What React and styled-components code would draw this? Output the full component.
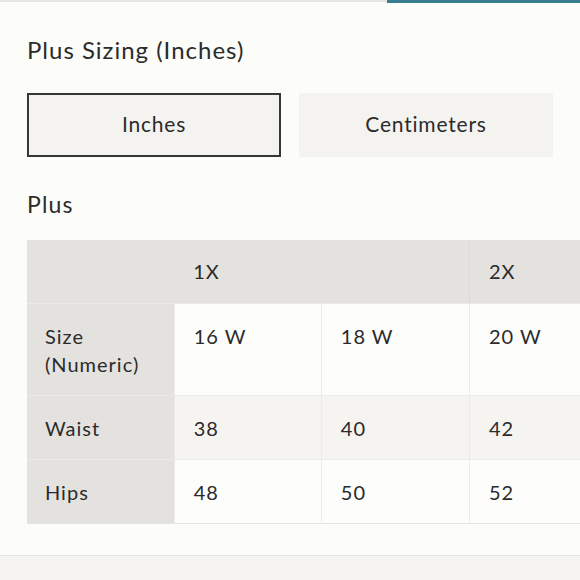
import React from 'react';
import styled, { createGlobalStyle } from 'styled-components';

const GlobalStyle = createGlobalStyle`
  html, body {
    margin: 0;
    padding: 0;
    background: #fcfcf8;
  }
  body {
    font-family: Lato, "Noto Sans", sans-serif;
    color: #2b2b2b;
    overflow: hidden;
  }
`;

const sizes = [
  { label: '1X', cols: ['16 W', '18 W'] },
  { label: '2X', cols: ['20 W', '22 W'] },
  { label: '3X', cols: ['24 W', '26 W'] },
];

const rows = [
  { name: 'Waist', values: ['38', '40', '42', '44', '46', '48'], shade: true },
  { name: 'Hips', values: ['48', '50', '52', '54', '56', '58'] },
];

export default function App() {
  const numeric = sizes.flatMap(s => s.cols);
  return (
    <Page>
      <GlobalStyle />
      <TopBar>
        <TopTrack />
        <TopActive />
      </TopBar>
      <Content>
        <Title>Plus Sizing (Inches)</Title>
        <Toggle>
          <UnitButton active>Inches</UnitButton>
          <UnitButton>Centimeters</UnitButton>
        </Toggle>
        <Subtitle>Plus</Subtitle>
        <TableWrap>
          <Table>
            <colgroup>
              <col style={{ width: 147 }} />
              {numeric.map((n, i) => (
                <col key={n} style={{ width: i === 0 ? 147 : 148 }} />
              ))}
            </colgroup>
            <thead>
              <tr>
                <HeadCell />
                {sizes.map((s, i) => (
                  <HeadCell key={s.label} colSpan={2} divided={i > 0 ? 1 : 0}>
                    {s.label}
                  </HeadCell>
                ))}
              </tr>
            </thead>
            <tbody>
              <tr>
                <RowLabel>
                  Size
                  <br />
                  (Numeric)
                </RowLabel>
                {numeric.map(n => (
                  <Cell key={n}>{n}</Cell>
                ))}
              </tr>
              {rows.map(r => (
                <tr key={r.name}>
                  <RowLabel>{r.name}</RowLabel>
                  {r.values.map((v, i) => (
                    <Cell key={i} shade={r.shade ? 1 : 0}>
                      {v}
                    </Cell>
                  ))}
                </tr>
              ))}
            </tbody>
          </Table>
        </TableWrap>
      </Content>
      <Footer />
    </Page>
  );
}

const Page = styled.div`
  width: 580px;
  height: 580px;
  display: flex;
  flex-direction: column;
  overflow: hidden;
`;

const TopBar = styled.div`
  display: flex;
  height: 3px;
`;

const TopTrack = styled.div`
  width: 387px;
  height: 2px;
  background: #e6e6e2;
`;

const TopActive = styled.div`
  flex: 1;
  background: #3b7d90;
`;

const Content = styled.div`
  padding: 0 0 0 27px;
`;

const Title = styled.h2`
  margin: 30px 0 0;
  font-size: 24px;
  font-weight: 400;
  line-height: 34px;
  letter-spacing: 1px;
`;

const Toggle = styled.div`
  display: flex;
  gap: 18px;
  margin-top: 26px;
`;

const UnitButton = styled.button`
  width: 254px;
  height: 64px;
  box-sizing: border-box;
  font-family: inherit;
  font-size: 21px;
  letter-spacing: 0.8px;
  color: #2b2b2b;
  background: #f4f3f0;
  border: ${p => (p.active ? '2px solid #363636' : '2px solid transparent')};
  padding: 0 0 3px;
`;

const Subtitle = styled.h3`
  margin: 32px 0 0;
  font-size: 23px;
  font-weight: 400;
  line-height: 30px;
  letter-spacing: 1.2px;
`;

const TableWrap = styled.div`
  margin-top: 21px;
  overflow: hidden;
`;

const Table = styled.table`
  border-collapse: collapse;
  table-layout: fixed;
  width: 1035px;
  font-size: 20px;
  line-height: 28px;
  letter-spacing: 1px;
  border-bottom: 1px solid #e4e3df;
`;

const HeadCell = styled.th`
  background: #e4e2de;
  font-weight: 400;
  text-align: left;
  padding: 17px 18px 18px 19px;
  height: 28px;
  border-left: ${p => (p.divided ? '1px solid #dddbd7' : 'none')};
`;

const RowLabel = styled.th`
  background: #e4e2de;
  font-weight: 400;
  text-align: left;
  vertical-align: top;
  padding: 18px 18px 17px;
  border-top: 1px solid #eae9e5;
`;

const Cell = styled.td`
  background: ${p => (p.shade ? '#f5f4f1' : '#fdfdfb')};
  vertical-align: top;
  padding: 18px 18px 17px 19px;
  border-top: 1px solid #ebeae6;
  border-left: 1px solid #ecebe7;
`;

const Footer = styled.div`
  margin-top: auto;
  height: 24px;
  border-top: 1px solid #e6e5e1;
  background: #f4f3f0;
`;
